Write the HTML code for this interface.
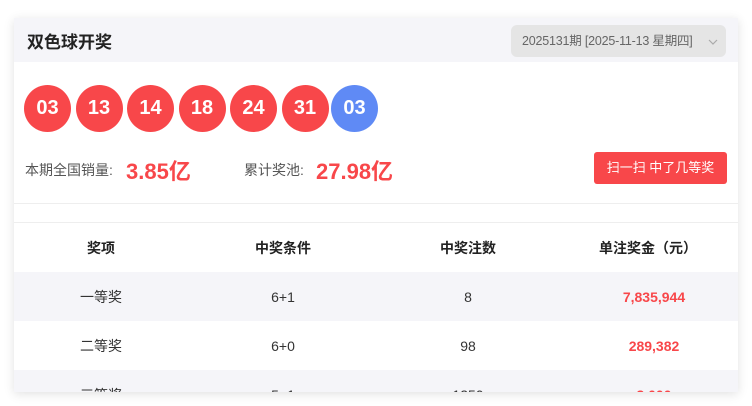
<!DOCTYPE html>
<html><head><meta charset="utf-8"><style>
*{margin:0;padding:0;box-sizing:border-box}
body{width:752px;height:406px;background:#fff;font-family:"Liberation Sans","Noto Sans CJK SC",sans-serif;overflow:hidden;position:relative}
.card{position:absolute;left:14px;top:18px;width:724px;height:374px;background:#fff;box-shadow:0 2px 10px rgba(0,0,0,.12);overflow:hidden}
.hd{height:44px;background:#f5f5f9;position:relative}
.hd h2{position:absolute;left:13px;top:10px;font-size:17px;font-weight:bold;color:#222}
.sel{position:absolute;left:497px;top:7px;width:215px;height:32px;background:#e5e5e5;border-radius:6px;font-size:12.5px;color:#666;line-height:32px;padding-left:11px;letter-spacing:-0.2px}
.sel svg{position:absolute;right:8px;top:13px}
.ball{position:absolute;top:67px;width:47px;height:47px;border-radius:50%;background:#f8474a;color:#fff;font-weight:bold;font-size:20px;text-align:center;line-height:47px}
.lab{position:absolute;top:142px;font-size:14px;color:#555}
.val{position:absolute;top:136px;font-size:22px;font-weight:bold;color:#f8474a}
.btn{position:absolute;left:580px;top:134px;width:133px;height:32px;background:#f8474a;border-radius:3px;color:#fff;font-size:13px;text-align:center;line-height:32px}
.l{position:absolute;left:0;width:724px;height:1px;background:#eee}
table{position:absolute;top:205px;left:0;width:724px;border-collapse:collapse;font-size:14px;color:#333}
td,th{height:49px;text-align:center}
th{font-weight:bold;color:#222}
tr.g{background:#f5f5f9}
.r{color:#f8474a;font-weight:bold;padding-left:12px}
</style></head><body>
<div class="card">
<div class="hd"><h2>双色球开奖</h2><div class="sel">2025131期 [2025-11-13 星期四]<svg width="10" height="8" viewBox="0 0 10 8"><path d="M1 2l4 4 4-4" fill="none" stroke="#aaa" stroke-width="1.2"/></svg></div></div>
<div class="ball" style="left:10px">03</div>
<div class="ball" style="left:61.5px">13</div>
<div class="ball" style="left:113px">14</div>
<div class="ball" style="left:164.5px">18</div>
<div class="ball" style="left:216px">24</div>
<div class="ball" style="left:267.5px">31</div>
<div class="ball" style="left:317px;background:#5f8af5">03</div>
<div class="lab" style="left:11px">本期全国销量:</div><div class="val" style="left:112px">3.85亿</div>
<div class="lab" style="left:230px">累计奖池:</div><div class="val" style="left:302px">27.98亿</div>
<div class="btn">扫一扫 中了几等奖</div>
<div class="l" style="top:185px"></div>
<div class="l" style="top:204px"></div>
<table>
<colgroup><col style="width:174px"><col style="width:190px"><col style="width:180px"><col style="width:180px"></colgroup>
<tr><th>奖项</th><th>中奖条件</th><th>中奖注数</th><th>单注奖金（元）</th></tr>
<tr class="g"><td>一等奖</td><td>6+1</td><td>8</td><td class="r">7,835,944</td></tr>
<tr><td>二等奖</td><td>6+0</td><td>98</td><td class="r">289,382</td></tr>
<tr class="g"><td>三等奖</td><td>5+1</td><td>1250</td><td class="r">3,000</td></tr>
</table>
</div>
</body></html>
